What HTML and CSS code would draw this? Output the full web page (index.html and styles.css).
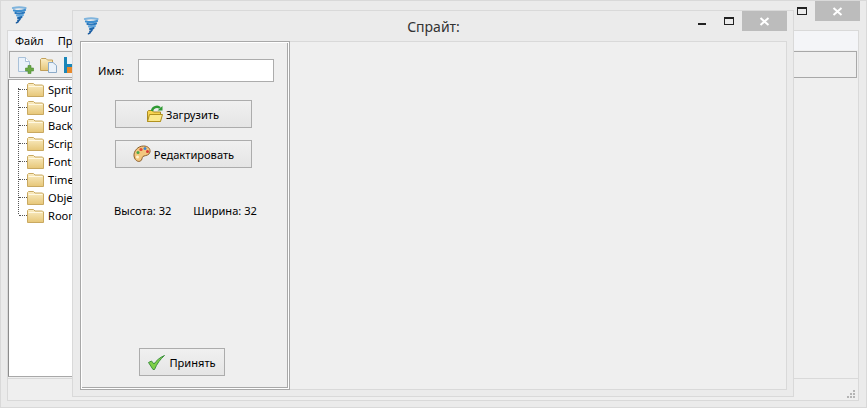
FILE: index.html
```html
<!DOCTYPE html>
<html lang="ru">
<head>
    <meta charset="UTF-8">
    <title>Спрайт</title>
    <link rel="stylesheet" href="styles.css">
</head>
<body>
    <svg class="defs" width="0" height="0">
        <defs>
            <linearGradient id="fold" x1="0" y1="0" x2="0" y2="1">
                <stop offset="0" stop-color="#fbeec6"/>
                <stop offset="1" stop-color="#e6c677"/>
            </linearGradient>
            <symbol id="twister" viewBox="0 0 16 18">
                <g fill="none" stroke-linecap="round">
                    <path d="M2 2Q8 .5 14.500 2" stroke="#7fb4dd" stroke-width="2.200"/>
                    <path d="M3 4.500Q8 6 14 4" stroke="#3f8fcf" stroke-width="2.200"/>
                    <path d="M4.500 7Q9 8.500 13 6.500" stroke="#2a78bd" stroke-width="2.200"/>
                    <path d="M6 9.500Q9 10.500 12 9" stroke="#5fa5dc" stroke-width="2"/>
                    <path d="M7 12Q9 12.500 10.500 11" stroke="#1f68ad" stroke-width="2"/>
                    <path d="M7 14.500Q8.500 14.500 9 13" stroke="#1c62a8" stroke-width="1.800"/>
                    <path d="M5.500 16.800Q7 16.500 7.500 15" stroke="#1c5c9f" stroke-width="1.600"/>
                </g>
            </symbol>
            <symbol id="folder" viewBox="0 0 17 15">
                <path d="M.5 14.500V2.500L1.500 1.500H6.500L8 3H15.500L16.500 4V14.500Z" fill="url(#fold)" stroke="#c9a961"/>
                <path d="M1.500 4.500H15.500" stroke="#fff8e2" fill="none"/>
            </symbol>
        </defs>
    </svg>

    <div class="main-win">
        <div class="main-title">
            <svg class="win-icon"><use href="#twister"/></svg>
            <div class="win-buttons main-buttons">
                <span class="btn-max"></span>
                <span class="btn-close">
                    <svg width="11" height="9" viewBox="0 0 11 9"><path d="M1.500 1L9.500 8M9.500 1L1.500 8" stroke="#fff" stroke-width="2" fill="none"/></svg>
                </span>
            </div>
        </div>
        <div class="main-client">
            <div class="menubar">
                <span class="menu-item">Файл</span>
                <span class="menu-item">Правка</span>
            </div>
            <div class="toolbar">
                <svg width="18" height="18" viewBox="0 0 18 18">
                    <path d="M2.500 1.500H9.500L13.500 5.500V15.500H2.500Z" fill="#eaf2fa" stroke="#a9c1d8"/>
                    <path d="M9.500 1.500V5.500H13.500" fill="#fff" stroke="#a9c1d8"/>
                    <path d="M12 9.500H15V12H17.500V15H15V17.500H12V15H9.500V12H12Z" fill="#69a844" stroke="#4d8a33" stroke-width=".6"/>
                </svg>
                <svg width="18" height="18" viewBox="0 0 18 18">
                    <path d="M.5 14.500V3.500L1.500 2.500H6L7.500 4H12.500V14.500Z" fill="url(#fold)" stroke="#c19f59"/>
                    <path d="M8.500 6.500H13L16.500 9.500V16.500H8.500Z" fill="#eaf2fa" stroke="#8cabc8"/>
                </svg>
                <svg width="16" height="18" viewBox="0 0 16 18">
                    <path d="M0 1H16V17H0Z" fill="#1a86b8"/>
                    <path d="M3 1H13V8H3Z" fill="#eef4f8"/>
                    <path d="M3 11H13V17H3Z" fill="#e8892c"/>
                </svg>
            </div>
            <div class="workspace">
                <div class="tree">
                    <div class="tree-row"><svg class="folder"><use href="#folder"/></svg>Sprites</div>
                    <div class="tree-row"><svg class="folder"><use href="#folder"/></svg>Sounds</div>
                    <div class="tree-row"><svg class="folder"><use href="#folder"/></svg>Backgrounds</div>
                    <div class="tree-row"><svg class="folder"><use href="#folder"/></svg>Scripts</div>
                    <div class="tree-row"><svg class="folder"><use href="#folder"/></svg>Fonts</div>
                    <div class="tree-row"><svg class="folder"><use href="#folder"/></svg>Time Lines</div>
                    <div class="tree-row"><svg class="folder"><use href="#folder"/></svg>Objects</div>
                    <div class="tree-row"><svg class="folder"><use href="#folder"/></svg>Rooms</div>
                </div>
            </div>
            <div class="statusbar">
                <svg class="grip" width="8" height="8" viewBox="0 0 8 8">
                    <path d="M6 0H8V2H6ZM3 3H5V5H3ZM6 3H8V5H6ZM0 6H2V8H0ZM3 6H5V8H3ZM6 6H8V8H6Z" fill="#b4b4b4"/>
                </svg>
            </div>
        </div>
    </div>

    <div class="child-win">
        <div class="child-title">
            <svg class="win-icon"><use href="#twister"/></svg>
            <span class="child-caption">Спрайт:</span>
            <div class="win-buttons child-buttons">
                <span class="btn-min"></span>
                <span class="btn-max"></span>
                <span class="btn-close">
                    <svg width="11" height="9" viewBox="0 0 11 9"><path d="M1.500 1L9.500 8M9.500 1L1.500 8" stroke="#fff" stroke-width="2" fill="none"/></svg>
                </span>
            </div>
        </div>
        <div class="child-client">
            <div class="side-panel">
                <div class="name-row">
                    <label class="name-label" for="sprite-name">Имя:</label>
                    <input class="name-input" id="sprite-name" type="text">
                </div>
                <button class="push-btn wide-btn first-btn">
                    <svg width="18" height="18" viewBox="0 0 18 18">
                        <path d="M1.500 16.500V6.500L2.500 5.500H6L7.500 7H14.500V16.500Z" fill="#f7d34f" stroke="#a98a22"/>
                        <path d="M1.500 16.500L3.500 9.500H16.500L14.500 16.500Z" fill="#fbe88a" stroke="#b1911f"/>
                        <path d="M6 6C6.500 2 11.500 0.500 14 3" stroke="#2f9a34" stroke-width="2.400" fill="none"/>
                        <path d="M11.500 5.500H16.500V1Z" fill="#2f9a34"/>
                    </svg>
                    Загрузить
                </button>
                <button class="push-btn wide-btn">
                    <svg width="18" height="18" viewBox="0 0 18 18">
                        <path d="M1 11C.5 6 5 1 10.500 1 15 1 17.500 3.500 17 7 16.500 10 13 10.500 11 11 9 11.500 9.500 13 8.500 15 7 17.500 2 17 1 11Z" fill="#f3c77e" stroke="#8b5e2c"/>
                        <circle cx="8" cy="4.500" r="1.600" fill="#e04a3a"/>
                        <circle cx="12" cy="3.500" r="1.500" fill="#3f86d0"/>
                        <circle cx="14.500" cy="6.500" r="1.500" fill="#d83a34"/>
                        <circle cx="5" cy="7.500" r="1.500" fill="#4aa84a"/>
                        <circle cx="4.500" cy="12" r="1.500" fill="#fff3d0"/>
                    </svg>
                    Редактировать
                </button>
                <div class="size-row">
                    <span>Высота: 32</span>
                    <span>Ширина: 32</span>
                </div>
                <button class="push-btn accept-btn">
                    <svg width="17" height="15" viewBox="0 0 17 15">
                        <path d="M.5 7.500L3.500 6 6 9C8 6 11.500 2.500 16.500 .5 12 4.500 9 8.500 6.500 14.500H5Z" fill="#7ed048" stroke="#3f9140" stroke-linejoin="round"/>
                    </svg>
                    Принять
                </button>
            </div>
            <div class="canvas-area"></div>
        </div>
    </div>
</body>
</html>
```

FILE: styles.css
```css
html, body {
    margin: 0;
    height: 408px;
    overflow: hidden;
}
body {
    position: relative;
    font-family: "Noto Sans", sans-serif;
    font-size: 11.1px;
    color: #000;
    background: #ebebeb;
}
.defs {
    position: absolute;
}

/* main window */
.main-win {
    box-sizing: border-box;
    height: 408px;
    border: 1px solid #d9d9d9;
    padding: 0 7px 6px 6px;
    display: flex;
    flex-direction: column;
}
.main-title {
    height: 29px;
    flex: none;
    position: relative;
}
.win-icon {
    width: 16px;
    height: 18px;
    display: block;
}
.main-title .win-icon {
    margin: 5px 0 0 4px;
}
.win-buttons {
    position: absolute;
    top: 0;
    display: flex;
    align-items: flex-start;
}
.main-buttons {
    right: -1px;
}
.btn-close {
    width: 45px;
    height: 20px;
    background: #bcbcbc;
    display: flex;
    align-items: center;
    justify-content: center;
}
.btn-max {
    box-sizing: border-box;
    width: 10px;
    height: 8px;
    border: 1px solid #222;
    border-top-width: 2px;
    margin: 6px 8px 0 0;
}
.btn-min {
    width: 8px;
    height: 2px;
    background: #222;
    margin: 12px 18px 0 0;
}
.main-client {
    flex: 1;
    min-height: 0;
    border: 1px solid #d9d9d9;
    background: #efefef;
    display: flex;
    flex-direction: column;
}
.menubar {
    height: 19px;
    flex: none;
    background: #f4f5f8;
    display: flex;
    align-items: center;
    gap: 14px;
    padding-left: 7px;
    box-sizing: border-box;
}
.toolbar {
    box-sizing: border-box;
    height: 27px;
    margin: 1px 1px 0 1px;
    border: 1px solid #a8a8a8;
    display: flex;
    align-items: center;
    gap: 6px;
    padding-left: 6px;
}
.workspace {
    flex: 1;
    min-height: 0;
    padding-top: 1px;
}
.tree {
    position: relative;
    box-sizing: border-box;
    width: 190px;
    height: 298px;
    background: #fff;
    border-left: 1px solid #8c8c8c;
    border-top: 1px solid #a8a8a8;
    border-bottom: 1px solid #a8a8a8;
    padding: 0 0 0 18px;
}
.tree::before {
    content: "";
    position: absolute;
    left: 9px;
    top: 8px;
    height: 126px;
    border-left: 1px dotted #555;
}
.tree-row {
    height: 18px;
    display: flex;
    align-items: center;
    gap: 4px;
    position: relative;
    white-space: nowrap;
}
.tree-row::before {
    content: "";
    position: absolute;
    left: -8px;
    width: 8px;
    border-top: 1px dotted #555;
}
.folder {
    width: 17px;
    height: 15px;
    flex: none;
}
.statusbar {
    height: 22px;
    flex: none;
    border-top: 1px solid #d9d9d9;
    display: flex;
    justify-content: flex-end;
    align-items: flex-end;
    padding: 0 3px 2px 0;
    box-sizing: border-box;
}

/* child window on top */
.child-win {
    position: absolute;
    left: 72px;
    top: 10px;
    box-sizing: border-box;
    width: 722px;
    height: 387px;
    background: #ebebeb;
    border: 1px solid #d9d9d9;
    padding: 0 6px 6px 7px;
    display: flex;
    flex-direction: column;
}
.child-title {
    height: 30px;
    flex: none;
    position: relative;
    display: flex;
    justify-content: center;
    align-items: center;
}
.child-title .win-icon {
    position: absolute;
    left: 3px;
    top: 6px;
}
.child-caption {
    font-size: 14px;
    color: #333;
}
.child-buttons {
    right: 0;
    align-items: flex-start;
}
.child-client {
    flex: 1;
    min-height: 0;
    display: flex;
    background: #efefef;
    border-right: 1px solid #d9d9d9;
    border-bottom: 1px solid #d9d9d9;
    border-top: 1px solid #d9d9d9;
}
.side-panel {
    box-sizing: border-box;
    width: 210px;
    flex: none;
    border: 1px solid #a8a8a8;
    margin-top: -1px;
    margin-bottom: -1px;
    box-shadow: inset -1px -1px 0 #fff, inset 1px 1px 0 #fff, inset -2px -2px 0 #a8a8a8;
    display: flex;
    flex-direction: column;
    padding: 17px 0 13px 34px;
}
.canvas-area {
    flex: 1;
}
.name-row {
    display: flex;
    align-items: center;
    margin-left: -16px;
    height: 23px;
}
.name-label {
    width: 39px;
    flex: none;
    margin-left: -1px;
    margin-right: 1px;
}
.name-input {
    box-sizing: border-box;
    width: 136px;
    height: 23px;
    border: 1px solid #acacac;
    background: #fff;
    margin: 0;
}
.push-btn {
    box-sizing: border-box;
    height: 28px;
    border: 1px solid #acacac;
    background: linear-gradient(#f0f0f0, #e5e5e5);
    font: inherit;
    color: inherit;
    padding: 0;
    display: flex;
    align-items: center;
    justify-content: center;
    gap: 3px;
}
.wide-btn {
    width: 137px;
    margin-top: 12px;
}
.first-btn {
    margin-top: 18px;
    padding-right: 2px;
    gap: 2px;
}
.size-row {
    display: flex;
    gap: 22px;
    margin: 35px 0 0 -1px;
    white-space: nowrap;
}
.accept-btn {
    width: 86px;
    margin: auto 0 0 24px;
    gap: 4px;
}
```
